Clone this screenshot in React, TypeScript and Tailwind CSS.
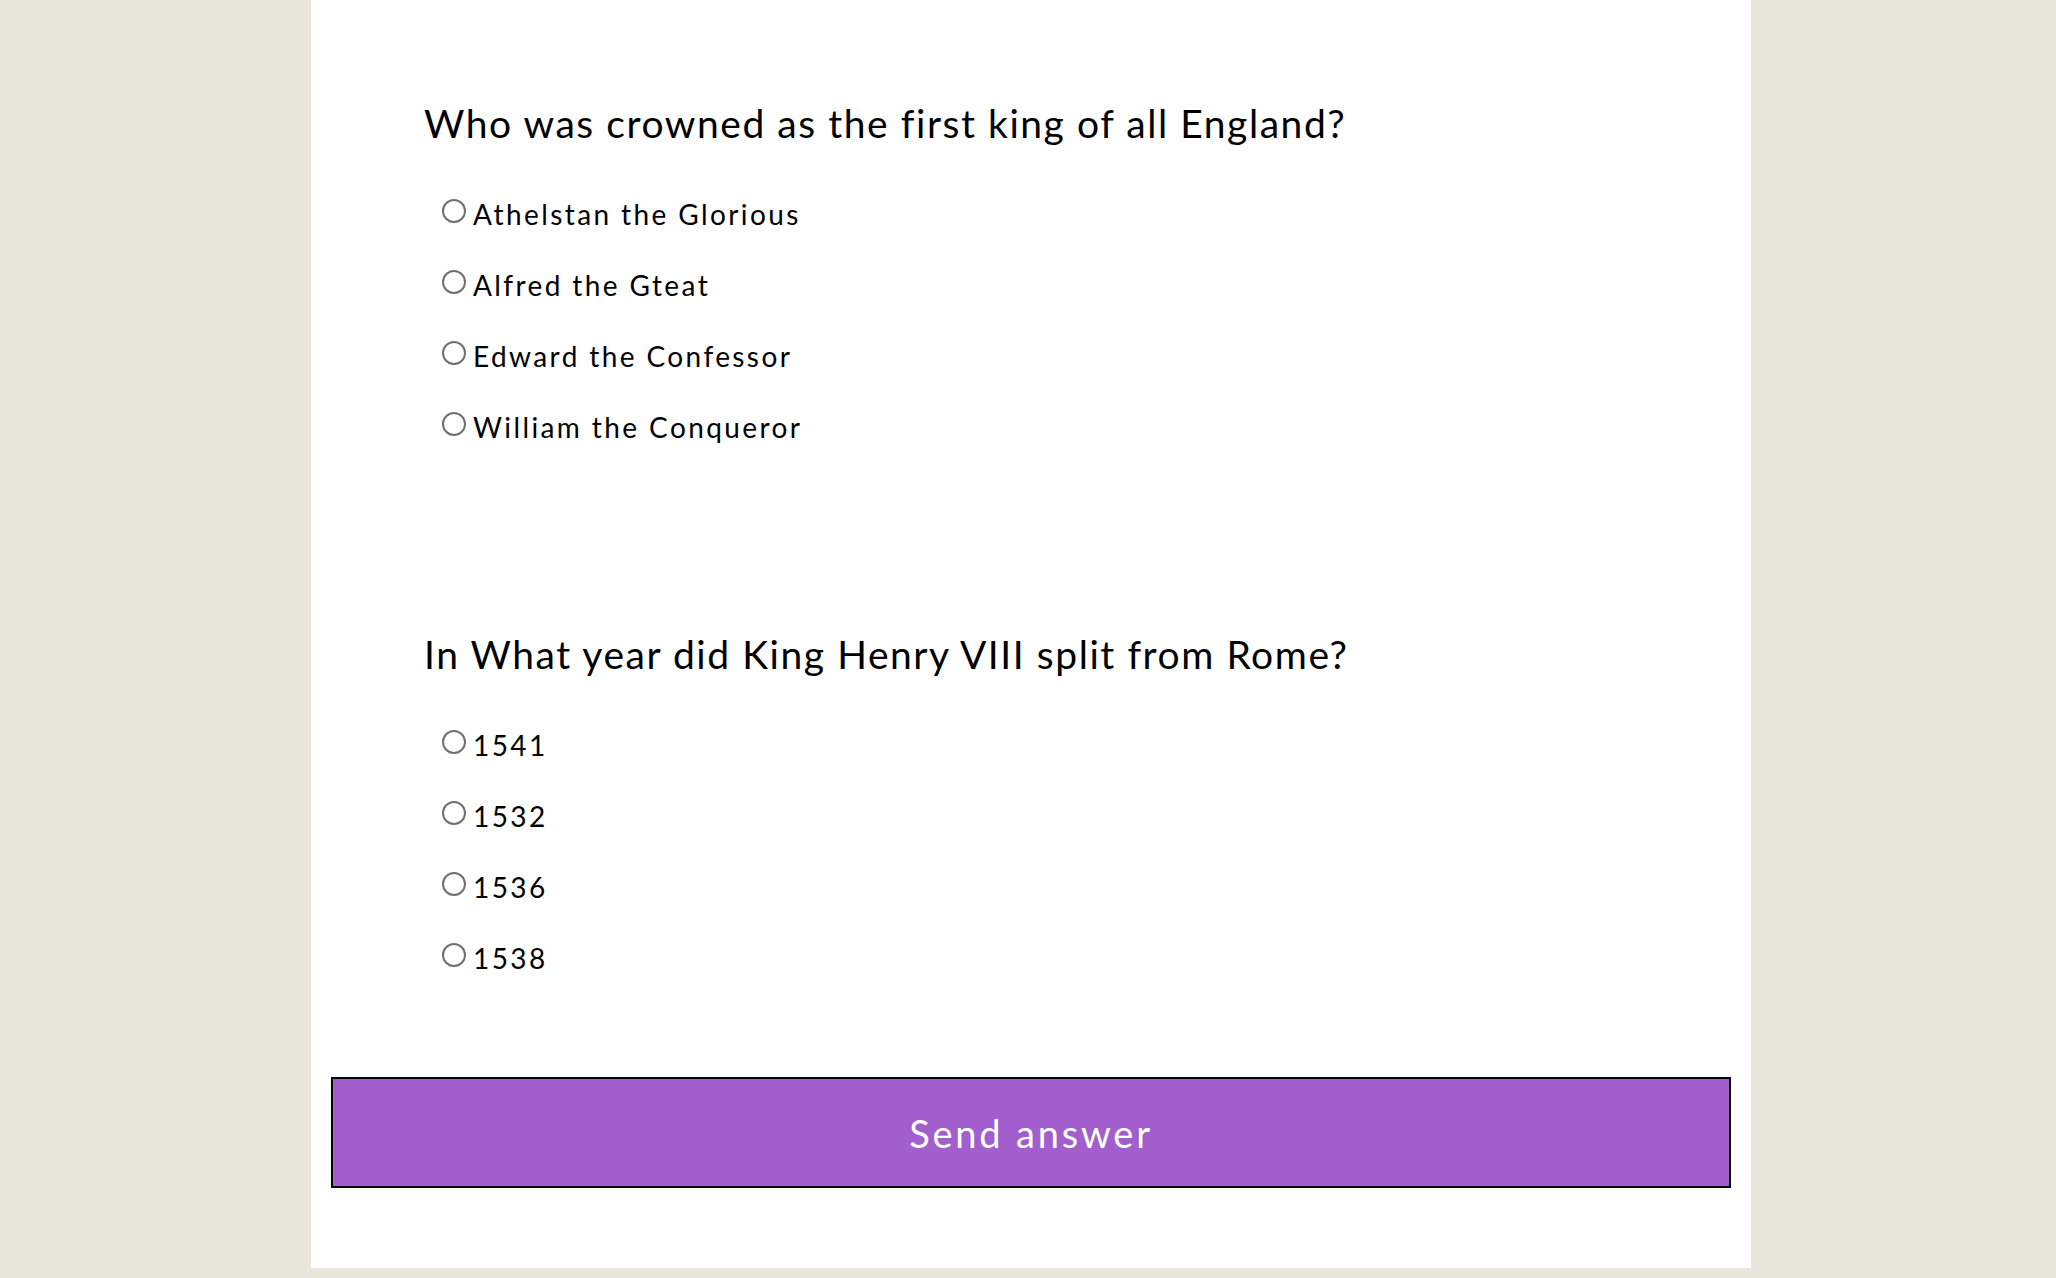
import { useState } from 'react';

const questions = [
  {
    id: 'q1',
    text: 'Who was crowned as the first king of all England?',
    options: ['Athelstan the Glorious', 'Alfred the Gteat', 'Edward the Confessor', 'William the Conqueror'],
  },
  {
    id: 'q2',
    text: 'In What year did King Henry VIII split from Rome?',
    options: ['1541', '1532', '1536', '1538'],
  },
];

function Question({ q, value, onChange }: { q: typeof questions[number]; value: string; onChange: (v: string) => void }) {
  return (
    <div className="pl-[93px]">
      <h2 className="text-[39px] leading-[48px] font-normal tracking-[1.55px] text-black">{q.text}</h2>
      <div className="mt-[49px] pl-[18px] flex flex-col gap-[35px]">
        {q.options.map((opt) => (
          <label key={opt} className="flex items-start h-[36px] cursor-pointer">
            <input
              type="radio"
              name={q.id}
              checked={value === opt}
              onChange={() => onChange(opt)}
              className="appearance-none w-[24px] h-[24px] mt-[3px] rounded-full border-2 border-[#707070] bg-white checked:border-[7px] checked:border-[#a25ecc] shrink-0"
            />
            <span className="ml-[7px] text-[28px] leading-[36px] tracking-[2.4px] text-black">{opt}</span>
          </label>
        ))}
      </div>
    </div>
  );
}

export default function App() {
  const [answers, setAnswers] = useState<Record<string, string>>({});

  return (
    <div className="min-h-screen bg-[#e9e6dc] pb-[9px] font-['Lato','Liberation_Sans',sans-serif]">
      <div className="ml-[311px] w-[1440px] bg-white px-[20px] pt-[99px] pb-[80px]">
        <div className="flex flex-col gap-[185px]">
          {questions.map((q) => (
            <Question
              key={q.id}
              q={q}
              value={answers[q.id] ?? ''}
              onChange={(v) => setAnswers({ ...answers, [q.id]: v })}
            />
          ))}
        </div>

        {/* Submit */}
        <button className="mt-[101px] w-full h-[111px] bg-[#a25ecc] border-2 border-black text-white text-[38px] tracking-[2.8px] leading-none">
          Send answer
        </button>
      </div>
    </div>
  );
}
